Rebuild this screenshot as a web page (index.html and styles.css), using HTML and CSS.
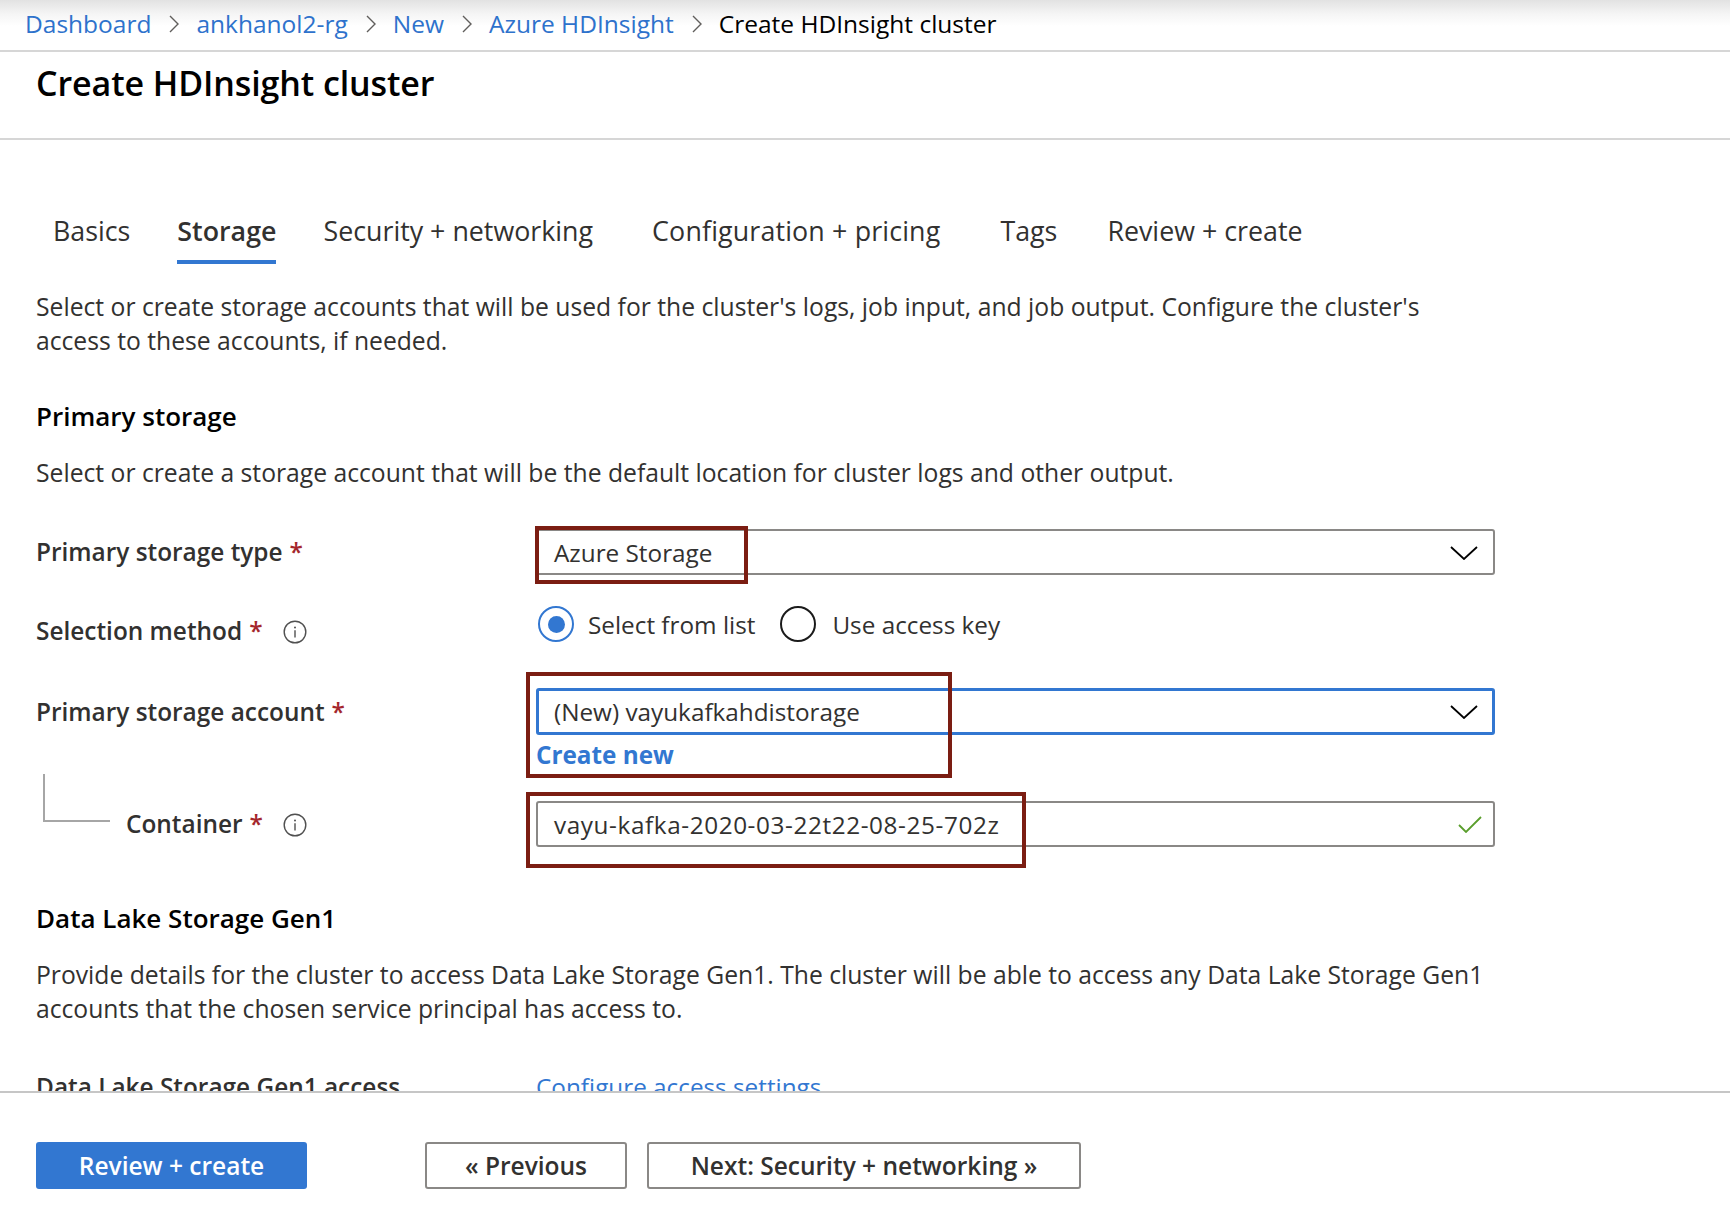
FILE: index.html
```html
<!DOCTYPE html>
<html lang="en">
<head>
<meta charset="utf-8">
<title>Create HDInsight cluster</title>
<link rel="stylesheet" href="styles.css">
</head>
<body>
<div class="page">
  <nav class="crumbs">
    <a class="crumb" href="#">Dashboard</a>
    <svg class="sep" viewBox="0 0 10 18" width="10" height="18"><polyline points="1,1 9,9 1,17" fill="none" stroke="#605e5c" stroke-width="1.4"/></svg>
    <a class="crumb" href="#">ankhanol2-rg</a>
    <svg class="sep" viewBox="0 0 10 18" width="10" height="18"><polyline points="1,1 9,9 1,17" fill="none" stroke="#605e5c" stroke-width="1.4"/></svg>
    <a class="crumb" href="#">New</a>
    <svg class="sep" viewBox="0 0 10 18" width="10" height="18"><polyline points="1,1 9,9 1,17" fill="none" stroke="#605e5c" stroke-width="1.4"/></svg>
    <a class="crumb" href="#">Azure HDInsight</a>
    <svg class="sep" viewBox="0 0 10 18" width="10" height="18"><polyline points="1,1 9,9 1,17" fill="none" stroke="#605e5c" stroke-width="1.4"/></svg>
    <span class="crumb current">Create HDInsight cluster</span>
  </nav>

  <header class="title-bar">
    <h1 class="title">Create HDInsight cluster</h1>
  </header>

  <main class="content">
    <div class="tabs">
      <span class="tab">Basics</span>
      <span class="tab active">Storage</span>
      <span class="tab">Security + networking</span>
      <span class="tab tab-config">Configuration + pricing</span>
      <span class="tab tab-tags">Tags</span>
      <span class="tab tab-review">Review + create</span>
    </div>

    <p class="text intro">Select or create storage accounts that will be used for the cluster's logs, job input, and job output. Configure the cluster's access to these accounts, if needed.</p>

    <h2 class="section">Primary storage</h2>
    <p class="text sub">Select or create a storage account that will be the default location for cluster logs and other output.</p>

    <div class="form">
      <div class="row row-type">
        <div class="label">Primary storage type <span class="req">*</span></div>
        <div class="control">
          <div class="select">
            <span class="value">Azure Storage</span>
            <svg class="chev" viewBox="0 0 28 14" width="28" height="14"><polyline points="1,1 14,13 27,1" fill="none" stroke="#000" stroke-width="1.8"/></svg>
          </div>
        </div>
      </div>

      <div class="row row-method">
        <div class="label">Selection method <span class="req">*</span>
          <svg class="info" viewBox="0 0 24 24" width="24" height="24"><circle cx="12" cy="12" r="10.8" fill="none" stroke="#505050" stroke-width="1.4"/><circle cx="12" cy="7.4" r="1" fill="#505050"/><line x1="12" y1="10.2" x2="12" y2="17.6" stroke="#505050" stroke-width="1.4"/></svg>
        </div>
        <div class="control radios">
          <label class="radio"><span class="dot on"></span>Select from list</label>
          <label class="radio"><span class="dot"></span>Use access key</label>
        </div>
      </div>

      <div class="row row-account">
        <div class="label">Primary storage account <span class="req">*</span></div>
        <div class="control">
          <div class="select focused">
            <span class="value">(New) vayukafkahdistorage</span>
            <svg class="chev" viewBox="0 0 28 14" width="28" height="14"><polyline points="1,1 14,13 27,1" fill="none" stroke="#000" stroke-width="1.8"/></svg>
          </div>
          <a class="create-new" href="#">Create new</a>
        </div>
      </div>

      <div class="row row-container">
        <div class="label child">Container <span class="req">*</span>
          <svg class="info" viewBox="0 0 24 24" width="24" height="24"><circle cx="12" cy="12" r="10.8" fill="none" stroke="#505050" stroke-width="1.4"/><circle cx="12" cy="7.4" r="1" fill="#505050"/><line x1="12" y1="10.2" x2="12" y2="17.6" stroke="#505050" stroke-width="1.4"/></svg>
        </div>
        <div class="control">
          <div class="select">
            <span class="value long">vayu-kafka-2020-03-22t22-08-25-702z</span>
            <svg class="check" viewBox="0 0 24 17" width="24" height="17"><polyline points="1,9 8,16 23,1" fill="none" stroke="#5a9e2c" stroke-width="1.8"/></svg>
          </div>
        </div>
      </div>
    </div>

    <h2 class="section gen1">Data Lake Storage Gen1</h2>
    <p class="text sub">Provide details for the cluster to access Data Lake Storage Gen1. The cluster will be able to access any Data Lake Storage Gen1 accounts that the chosen service principal has access to.</p>

    <div class="row row-access">
      <div class="label">Data Lake Storage Gen1 access</div>
      <div class="control"><a class="link" href="#">Configure access settings</a></div>
    </div>
  </main>

  <footer class="footer">
    <button class="btn primary">Review + create</button>
    <button class="btn prev">« Previous</button>
    <button class="btn next">Next: Security + networking »</button>
  </footer>

  <div class="mark mark-type"></div>
  <div class="mark mark-account"></div>
  <div class="mark mark-container"></div>
</div>
</body>
</html>
```
FILE: styles.css
```css
* { box-sizing: border-box; }
html, body { margin: 0; padding: 0; }
body {
  font-family: "Open Sans", "Noto Sans", "Liberation Sans", sans-serif;
  color: #323130;
  background: #fff;
}
.page {
  position: relative;
  height: 1216px;
  display: flex;
  flex-direction: column;
  overflow: hidden;
}
a { text-decoration: none; }

/* breadcrumb */
.crumbs {
  height: 52px;
  flex: none;
  display: flex;
  align-items: center;
  padding: 0 0 4px 25px;
  background: linear-gradient(#e2e2e2 0, #f5f5f5 14px, #fff 26px);
  border-bottom: 2px solid #d6d6d6;
  font-size: 24.5px;
}
.crumb { color: #2e72cc; white-space: nowrap; }
.crumb.current { color: #000; }
.sep { margin: 2px 17px 0 18px; flex: none; }

/* title */
.title-bar {
  height: 88px;
  flex: none;
  border-bottom: 2px solid #d6d6d6;
  padding: 8px 0 0 36px;
}
.title {
  margin: 0;
  font-size: 34px;
  font-weight: 600;
  line-height: 46px;
  color: #000;
  letter-spacing: -0.1px;
}

/* content */
.content {
  flex: 1;
  overflow: hidden;
  padding: 74px 0 0 36px;
}
.tabs {
  display: flex;
  gap: 47px;
  padding-left: 17px;
}
.tab {
  font-size: 26.8px;
  line-height: 34px;
  padding-bottom: 12px;
  border-bottom: 4px solid transparent;
  color: #323130;
  white-space: nowrap;
}
.tab-config { margin-left: 12px; letter-spacing: 0.15px; }
.tab-tags { margin-left: 13px; }
.tab-review { margin-left: 3px; }
.tab.active {
  font-weight: 600;
  border-bottom-color: #3277d1;
}
.text {
  margin: 0;
  font-size: 24.7px;
  line-height: 34px;
  max-width: 1455px;
}
.intro { margin-top: 26px; }
.section {
  margin: 41px 0 0;
  font-size: 26px;
  line-height: 34px;
  font-weight: 600;
  color: #000;
}
.sub { margin-top: 23px; }
.section.gen1 { margin-top: 54px; }

/* form */
.form { margin-top: 39px; }
.row {
  display: flex;
  align-items: flex-start;
}
.label {
  width: 500px;
  flex: none;
  font-size: 24.4px;
  font-weight: 600;
  line-height: 46px;
  display: flex;
  align-items: center;
  position: relative;
  white-space: nowrap;
}
.req { color: #a4262c; margin-left: 7px; font-weight: 600; }
.info { margin-left: 20px; margin-top: 2px; }
.control { width: 959px; flex: none; }

.select {
  height: 46px;
  border: 2px solid #8a8886;
  border-radius: 3px;
  display: flex;
  align-items: center;
  justify-content: space-between;
  padding: 0 15px 0 16px;
  font-size: 24.3px;
  color: #323130;
}
.select.focused {
  height: 47px;
  border: 3px solid #3277d1;
  padding-left: 15px;
  padding-right: 14px;
}
.value.long { letter-spacing: 0.6px; }
.chev { margin-top: 1px; }
.check { margin-right: -4px; }

.row-method { margin-top: 33px; }
.radios {
  display: flex;
  gap: 25px;
  margin-top: -2px;
  font-size: 24.3px;
  font-weight: 400;
}
.radio {
  display: flex;
  align-items: center;
  height: 36px;
}
.dot {
  width: 36px;
  height: 36px;
  border-radius: 50%;
  border: 2px solid #1b1b1b;
  margin-right: 16px;
  flex: none;
  position: relative;
}
.dot.on { border-color: #3277d1; margin-left: 2px; margin-right: 14px; }
.dot.on::after {
  content: "";
  position: absolute;
  left: 7.5px;
  top: 7.5px;
  width: 17px;
  height: 17px;
  border-radius: 50%;
  background: #3277d1;
}

.row-account { margin-top: 34px; }
.row-account .label { line-height: 47px; }
.create-new {
  display: block;
  margin-top: 3px;
  font-size: 24.3px;
  font-weight: 700;
  line-height: 34px;
  color: #3277d1;
}
.row-container { margin-top: 29px; }
.label.child { padding-left: 90px; }
.label.child::before {
  content: "";
  position: absolute;
  left: 7px;
  top: -27px;
  width: 65px;
  height: 46px;
  border-left: 2px solid #a6a6a6;
  border-bottom: 2px solid #a6a6a6;
}

.row-access { margin-top: 38px; }
.link { font-size: 24.3px; line-height: 46px; color: #3277d1; }

/* footer */
.footer {
  height: 125px;
  flex: none;
  border-top: 2px solid #c6c6c6;
  padding: 49px 0 0 36px;
  display: flex;
  align-items: flex-start;
  background: #fff;
}
.btn {
  height: 47px;
  font-family: inherit;
  font-size: 24.5px;
  font-weight: 600;
  border-radius: 3px;
  padding: 0;
  cursor: pointer;
}
.btn.primary {
  width: 271px;
  background: #3277d1;
  border: none;
  color: #fff;
}
.btn.prev {
  width: 202px;
  margin-left: 118px;
  background: #fff;
  border: 2px solid #8a8886;
  color: #323130;
}
.btn.next {
  width: 434px;
  margin-left: 20px;
  background: #fff;
  border: 2px solid #8a8886;
  color: #323130;
}

/* annotation boxes drawn over the screenshot */
.mark {
  position: absolute;
  border: 4px solid #7b1d12;
  pointer-events: none;
}
.mark-type { left: 535px; top: 526px; width: 213px; height: 58px; }
.mark-account { left: 526px; top: 672px; width: 426px; height: 106px; }
.mark-container { left: 526px; top: 792px; width: 500px; height: 76px; }
```
